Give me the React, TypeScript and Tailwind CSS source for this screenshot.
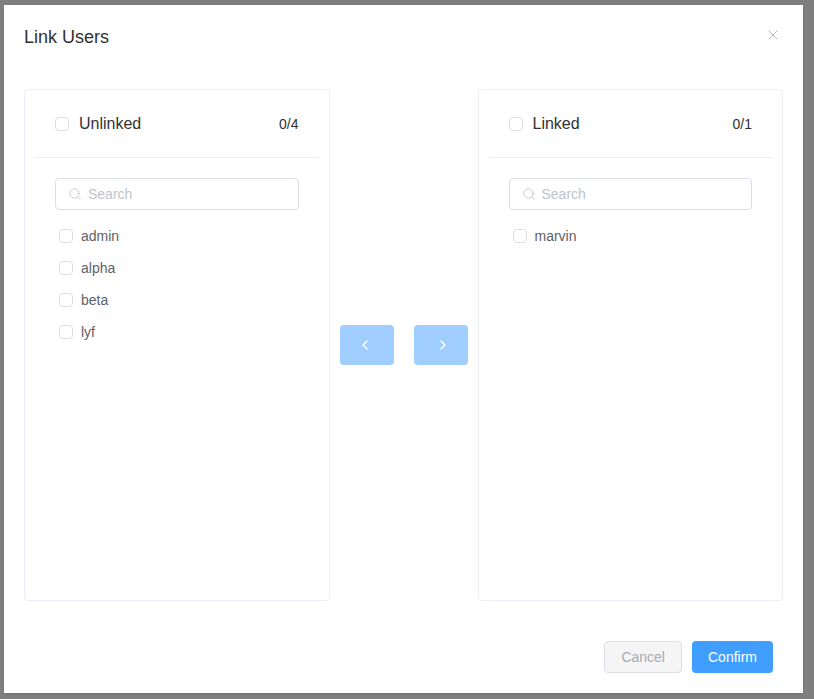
import { ChevronLeft, ChevronRight, Search, X } from 'lucide-react';

function Checkbox() {
  return <span className="size-3.5 shrink-0 rounded-sm border border-[#dcdfe6] bg-white" />;
}

function TransferPanel({ title, count, items }: { title: string; count: string; items: string[] }) {
  return (
    <div className="h-128 flex-1 rounded border border-[#ebeef5] bg-white">
      <div className="mx-2.5 flex h-17 items-center justify-between border-b border-[#ebeef5] px-5">
        <div className="flex items-center gap-2.5">
          <Checkbox />
          <span className="text-base text-[#303133]">{title}</span>
        </div>
        <span className="text-sm text-[#303133]">{count}</span>
      </div>
      <div className="px-7.5 pt-5">
        <div className="flex h-8 items-center gap-1.5 rounded border border-[#dcdfe6] px-3">
          <Search className="size-3.5 text-[#c0c4cc]" strokeWidth={1.5} />
          <span className="text-sm text-[#c0c4cc]">Search</span>
        </div>
        <ul className="mt-2.5 px-1">
          {items.map((item) => (
            <li key={item} className="flex h-8 items-center gap-2">
              <Checkbox />
              <span className="text-sm text-[#606266]">{item}</span>
            </li>
          ))}
        </ul>
      </div>
    </div>
  );
}

export default function App() {
  return (
    <div className="h-screen bg-[#7f7f7f] pl-1 pt-[5px] font-['Liberation_Sans',Arial,sans-serif]">
      <div className="w-[799px] bg-white pb-5 shadow-sm">
        <div className="flex items-start justify-between px-5 pt-5">
          <h2 className="text-lg leading-6 text-[#303133]">Link Users</h2>
          <button className="mr-0.5 mt-0.5 text-[#909399]">
            <X className="size-4" strokeWidth={1} />
          </button>
        </div>
        <div className="mt-10 flex px-5">
          <TransferPanel title="Unlinked" count="0/4" items={['admin', 'alpha', 'beta', 'lyf']} />
          <div className="flex w-37 items-center justify-center gap-5">
            <button className="flex h-10 w-13.5 items-center justify-center rounded bg-[#a0cfff] pr-1 text-white">
              <ChevronLeft className="size-4" />
            </button>
            <button className="flex h-10 w-13.5 items-center justify-center rounded bg-[#a0cfff] pl-1 text-white">
              <ChevronRight className="size-4" />
            </button>
          </div>
          <TransferPanel title="Linked" count="0/1" items={['marvin']} />
        </div>
        <div className="mt-10 flex justify-end gap-2.5 pr-7.5">
          <button className="h-8 rounded border border-[#dcdfe6] bg-[#f5f5f5] px-4 text-sm text-[#a8abb2]">Cancel</button>
          <button className="h-8 rounded bg-[#409eff] px-4 text-sm text-white">Confirm</button>
        </div>
      </div>
    </div>
  );
}
